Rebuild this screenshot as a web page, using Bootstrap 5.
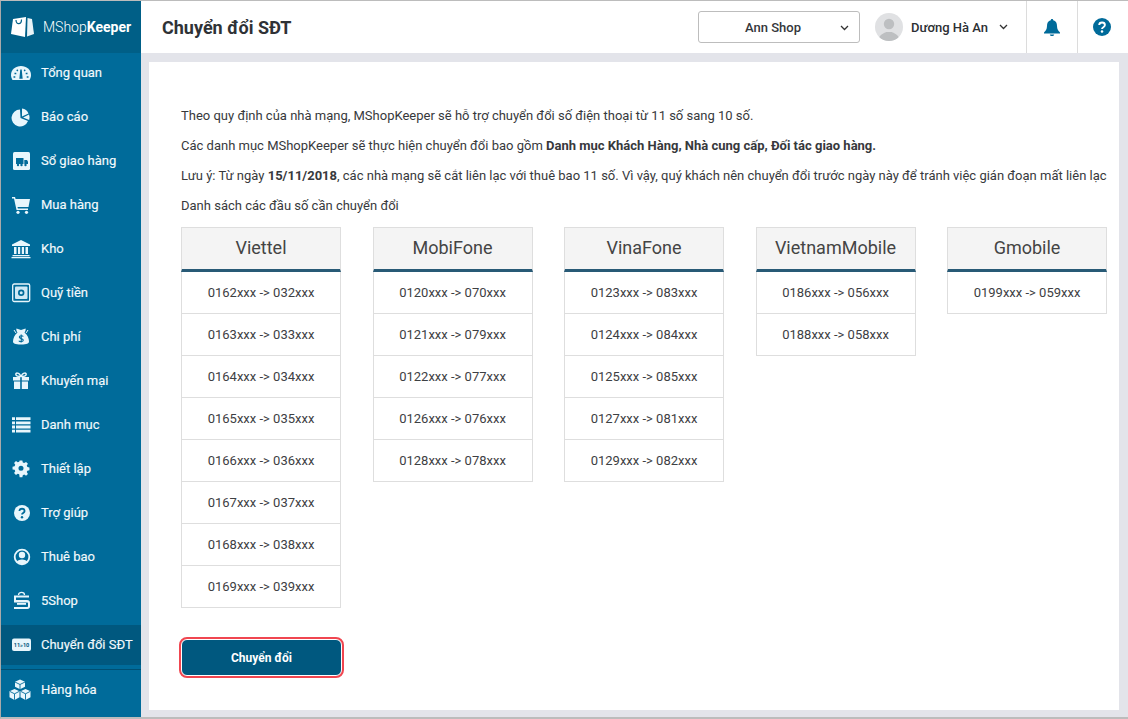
<!DOCTYPE html>
<html lang="vi">
<head>
<meta charset="utf-8">
<title>Chuyển đổi SĐT</title>
<link rel="stylesheet" href="https://cdn.jsdelivr.net/npm/bootstrap@5.3.0/dist/css/bootstrap.min.css">
<style>
html,body{height:100%;margin:0;overflow:hidden}
body{font-family:Roboto,"Liberation Sans",sans-serif;font-size:13px;color:#37393c;background:#e3e4ea}
.shell{width:1128px;height:719px;border:1px solid #bcbcbc;border-right:0;border-bottom:2px solid #bcbcbc;border-left-color:#a9a9a9}
.sidebar{width:140px;flex:none;background:#006b9a;color:#fff}
.brand{height:52px;background:#005f87;font-size:14px;padding-left:10px;gap:9px;margin-bottom:-2px;position:relative;z-index:1}
.brand span{font-weight:300}
.brand b{font-weight:700}
.sideitem{height:44px;padding-left:10px;gap:10px;font-size:13px;font-weight:400;-webkit-text-stroke:.15px #f2f9fc;color:#f2f9fc;white-space:nowrap}
.sideitem svg{width:20px;height:20px;flex:none}
.sideitem.now{height:40px;background:#00587f;margin-top:2px;margin-bottom:4px}
.sideitem.last{border-top:1px solid #004f72;height:41px}
.badgetext{font:700 5.600px Roboto,"Liberation Sans",sans-serif;fill:#00587f;-webkit-text-stroke:0}
.topbar{height:52px;background:#fff;flex:none}
.pagetitle{font-size:18px;font-weight:700;color:#2f3236;padding-left:21px}
.shopbox{width:162px;height:32px;border:1px solid #bdbdbd;border-radius:3px;font-size:13px;font-weight:500;color:#34373b;position:relative;margin-right:15px;padding-top:1px}
.shopbox .shopname{margin-left:-12px}
.shopbox svg{position:absolute;right:10px;top:13px}
.avatar{width:28px;height:28px;border-radius:50%;background:#e0e1e3;overflow:hidden;flex:none}
.username{font-size:13px;font-weight:500;color:#2c2f33;margin-left:8px;margin-right:11px;white-space:nowrap;padding-top:2px}
.topcell{width:51px;height:52px;border-left:1px solid #dcdcdc}
.helpcell{padding-right:3px}
.userblock{width:151px}
.stage{padding:9px 9px 7px 8px;min-height:0}
.panel{background:#fff;padding:45px 0 0 32px;height:100%;overflow:hidden}
.copy{height:30px;line-height:16px;margin:0;padding-top:1px;white-space:nowrap}
.copy b{font-weight:700}
.netgrid{display:flex;gap:31.5px;margin-top:0;align-items:flex-start}
.netcol{width:160px;flex:none}
.nethead{height:45px;background:#f4f4f4;border:1px solid #dedede;border-bottom:3px solid #285a76;font-size:18px;color:#444;text-align:center;line-height:40px}
.netrow{height:42px;border:1px solid #dedede;border-top:0;text-align:center;line-height:41px;font-size:13px;color:#3d4043}
.convert{display:block;width:161px;height:37px;margin-top:31px;background:#00587f;color:#fff;font-weight:700;font-size:12px;border:1px solid #fff;border-radius:6px;outline:2px solid #f04650;padding:1px 0 0}
</style>
</head>
<body>
<div class="shell d-flex">
  <nav class="sidebar d-flex flex-column">
    <div class="brand d-flex align-items-center">
      <svg width="23" height="20" viewBox="0 0 23 20"><path d="M2 2 15 0l-1 20L0 17z" fill="#fff"/><path d="M16.500 1l4.500 1 2 15-7 2.500z" fill="#e9f4f8"/><path d="M5 3c0 5 5.500 5 5.500-.5" fill="none" stroke="#005f87" stroke-width="1.200"/></svg>
      <div><span>MShop</span><b>Keeper</b></div>
    </div>
    <div class="sideitem d-flex align-items-center"><svg viewBox="0 0 20 20"><path d="M1.500 17C.5 15.500 0 13.800 0 12 0 6.500 4.500 3 10 3s10 3.500 10 9c0 1.800-.5 3.500-1.500 5z" fill="#e8f6fc"/><path d="M10 6.500l.9 8.500H9.100zM3.500 10.500h1.800M14.700 10.500h1.800M5.800 6.800l1 1.200M14.200 6.800l-1 1.200M2.500 14h1.800M15.700 14h1.800" stroke="#006b9a" stroke-width="1.400" fill="#006b9a"/></svg>Tổng quan</div>
    <div class="sideitem d-flex align-items-center"><svg viewBox="0 0 20 20"><path d="M9 2.500a8.500 8.500 0 1 0 8 11.500L9.500 11z" fill="#e8f6fc"/><path d="M11 1.500a8 8 0 0 1 6.500 5L11 9.500zM12 10.500l6-3a8 8 0 0 1 .2 5.500z" fill="#e8f6fc"/></svg>Báo cáo</div>
    <div class="sideitem d-flex align-items-center"><svg viewBox="0 0 20 20"><rect x="2" y="1" width="17" height="18" rx="1.500" fill="#e8f6fc"/><path d="M5 7h7.500v6H5zM13.300 9h2.700l1 1.800V13h-3.700z" fill="#006b9a"/><circle cx="7" cy="14" r="1.200" fill="#006b9a"/><circle cx="10.500" cy="14" r="1.200" fill="#006b9a"/><circle cx="14.500" cy="14" r="1.200" fill="#006b9a"/></svg>Sổ giao hàng</div>
    <div class="sideitem d-flex align-items-center"><svg viewBox="0 0 20 20"><path d="M1 2h3l.6 2H19l-1.500 8H6.500l.4 1.500H17V15H5.500L3 3.500H1z" fill="#e8f6fc"/><circle cx="7" cy="17.300" r="1.600" fill="#e8f6fc"/><circle cx="15.500" cy="17.300" r="1.600" fill="#e8f6fc"/></svg>Mua hàng</div>
    <div class="sideitem d-flex align-items-center"><svg viewBox="0 0 20 20"><path d="M10 1l9 4.500V7H1V5.500z" fill="#e8f6fc"/><path d="M3 8h2.500v7H3zM7 8h2.200v7H7zM10.800 8H13v7h-2.200zM14.500 8H17v7h-2.500zM1.500 16h17v1.200h-17zM.5 18h19v1.200H.5z" fill="#e8f6fc"/></svg>Kho</div>
    <div class="sideitem d-flex align-items-center"><svg viewBox="0 0 20 20"><rect x="1.700" y="1" width="17" height="17.500" rx="1.500" fill="none" stroke="#e8f6fc" stroke-width="1.300"/><rect x="4" y="3.500" width="12.500" height="12.500" rx="1" fill="#cfe9f5"/><circle cx="10.200" cy="9.700" r="3.200" fill="#006b9a"/><circle cx="10.200" cy="9.700" r="1.500" fill="#cfe9f5"/></svg>Quỹ tiền</div>
    <div class="sideitem d-flex align-items-center"><svg viewBox="0 0 20 20"><path d="M6.500 5.500C5.500 4 5 2.500 5.500 1.500L10 3l4.500-1.500c.5 1 0 2.500-1 4 3 2.500 4.500 6 4.500 9 0 2-2 3-8 3s-8-1-8-3c0-3 1.500-6.500 4.500-9z" fill="#e8f6fc"/><path d="M3 3l2 3M17 3l-2 3" stroke="#e8f6fc" stroke-width="1"/><path d="M12.300 9.500c-.6-1-3.900-1.300-4 .5-.1 2 4.100 1.200 4 3.300-.1 1.800-3.700 1.600-4.500.4M10.200 7.500v8" fill="none" stroke="#006b9a" stroke-width="1.100"/></svg>Chi phí</div>
    <div class="sideitem d-flex align-items-center"><svg viewBox="0 0 20 20"><path d="M2 6h7.200v3.500H2zM10.800 6H18v3.500h-7.200zM3 10.500h6.200V18H3zM10.800 10.500H17V18h-6.200z" fill="#e8f6fc"/><path d="M10 5.500C8 1 4 1.500 5 4c.5 1.300 3 1.500 5 1.500zm0 0c2-4.500 6-4 5-1.500-.5 1.300-3 1.500-5 1.500z" fill="none" stroke="#e8f6fc" stroke-width="1.500"/></svg>Khuyến mại</div>
    <div class="sideitem d-flex align-items-center"><svg viewBox="0 0 20 20"><path d="M1 3h3v2.800H1zM5 3h14.500v2.800H5zM1 7.200h3V10H1zM5 7.200h14.500V10H5zM1 11.400h3v2.800H1zM5 11.400h14.500v2.800H5zM1 15.600h3v2.800H1zM5 15.600h14.500v2.800H5z" fill="#e8f6fc" transform="translate(0 -.8)"/></svg>Danh mục</div>
    <div class="sideitem d-flex align-items-center"><svg viewBox="0 0 20 20"><path fill-rule="evenodd" d="M8.500 2h3l.5 2.300 1.600.7 2-1.300 2.100 2.100-1.300 2 .7 1.600 2.300.5v3l-2.300.5-.7 1.600 1.300 2-2.100 2.100-2-1.300-1.600.7-.5 2.300h-3L8 17.500l-1.600-.7-2 1.300-2.100-2.100 1.300-2-.7-1.600L.6 12V9l2.300-.5.7-1.600-1.300-2 2.100-2.100 2 1.300L8 3.400zM10 8a2.800 2.800 0 1 0 0 5.600A2.800 2.800 0 0 0 10 8z" fill="#e8f6fc" transform="translate(1 -.4) scale(.9)"/></svg>Thiết lập</div>
    <div class="sideitem d-flex align-items-center"><svg viewBox="0 0 20 20"><circle cx="11" cy="10" r="8" fill="#e8f6fc"/><path d="M8.400 8c.1-3 5.200-3 5.200 0 0 2-2.600 2-2.600 3.600" fill="none" stroke="#006b9a" stroke-width="1.800"/><circle cx="11" cy="14.200" r="1.200" fill="#006b9a"/></svg>Trợ giúp</div>
    <div class="sideitem d-flex align-items-center"><svg viewBox="0 0 20 20"><circle cx="11" cy="10" r="7.300" fill="none" stroke="#e8f6fc" stroke-width="1.800"/><circle cx="11" cy="8" r="3.200" fill="#e8f6fc"/><path d="M5.500 15c1-3.500 10-3.500 11 0-3 3-8 3-11 0z" fill="#e8f6fc"/></svg>Thuê bao</div>
    <div class="sideitem d-flex align-items-center"><svg viewBox="0 0 20 20"><path d="M3 4.500h15v2H5V9h11c2 0 3 1 3 3v3.500c0 1.500-1 2.500-2.500 2.500H3v-2h13c.7 0 1-.3 1-1v-2.500c0-.7-.3-1-1-1H3z" fill="#e8f6fc"/><path d="M7.500 4c0-3.500 6-3.500 6 0" fill="none" stroke="#e8f6fc" stroke-width="1.300"/><path d="M6 12h9v1.800H6z" fill="#e8f6fc"/></svg>5Shop</div>
    <div class="sideitem now d-flex align-items-center"><svg viewBox="0 0 20 20"><rect x="1" y="3.500" width="19" height="12.500" rx="2" fill="#e8f6fc"/><text class="badgetext" x="10.500" y="11.800" text-anchor="middle">11»10</text></svg>Chuyển đổi SĐT</div>
    <div class="sideitem last d-flex align-items-center"><svg viewBox="0 0 22 22" style="margin-left:-2px;width:22px;height:22px"><path d="M11 .5l5 2.300v5L11 10.300 6 7.800v-5zM5.500 10l5 2.300v6L5.500 21 .5 18.300v-6zM16.500 10l5 2.300v6L16.500 21l-5-2.700v-6z" fill="#e8f6fc"/><path d="M6 3l5 2.500L16 3M11 5.500v4.500M1 12.500l4.500 2.300 4.500-2.300M5.500 14.800v6M12 12.500l4.500 2.300 4.500-2.300M16.500 14.800v6" fill="none" stroke="#006b9a" stroke-width=".9"/></svg>Hàng hóa</div>
  </nav>
  <div class="flex-grow-1 d-flex flex-column" style="min-width:0">
    <header class="topbar d-flex align-items-center">
      <div class="pagetitle flex-grow-1">Chuyển đổi SĐT</div>
      <div class="shopbox d-flex align-items-center justify-content-center"><span class="shopname">Ann Shop</span><svg width="9" height="6" viewBox="0 0 9 6"><path d="M1 1l3.500 3.500L8 1" fill="none" stroke="#333" stroke-width="1.300"/></svg></div>
      <div class="userblock d-flex align-items-center">
        <div class="avatar"><svg width="28" height="28" viewBox="0 0 28 28"><circle cx="14" cy="11" r="5.200" fill="#bdbfc1"/><path d="M3 28c1-7 7-8 8-9h6c1 1 7 2 8 9z" fill="#bdbfc1"/></svg></div>
        <div class="username">Dương Hà An</div>
        <svg width="9" height="6" viewBox="0 0 9 6"><path d="M1 1l3.500 3.500L8 1" fill="none" stroke="#333" stroke-width="1.300"/></svg>
      </div>
      <div class="topcell d-flex align-items-center justify-content-center"><svg width="16" height="19" viewBox="0 0 16 19"><path d="M8 1c.8 0 1.200.5 1.200 1.200C12 3 13 5 13 8c0 3.500 1.500 5 3 6.500V15.500H0v-1C1.500 13 3 11.500 3 8c0-3 1-5 3.800-5.800C6.800 1.500 7.200 1 8 1z" fill="#006b9a"/><path d="M5.800 16.500h4.400c-.3 2-4.100 2-4.400 0z" fill="#006b9a"/></svg></div>
      <div class="topcell helpcell d-flex align-items-center justify-content-center"><svg width="18" height="18" viewBox="0 0 18 18"><circle cx="9" cy="9" r="9" fill="#006b9a"/><path d="M6.200 7c.1-3.300 5.700-3.300 5.700 0 0 2.200-2.900 2.100-2.900 4" fill="none" stroke="#fff" stroke-width="1.900"/><circle cx="9" cy="13.500" r="1.250" fill="#fff"/></svg></div>
    </header>
    <main class="stage flex-grow-1">
      <div class="panel">
        <p class="copy">Theo quy định của nhà mạng, MShopKeeper sẽ hỗ trợ chuyển đổi số điện thoại từ 11 số sang 10 số.</p>
        <p class="copy">Các danh mục MShopKeeper sẽ thực hiện chuyển đổi bao gồm <b>Danh mục Khách Hàng, Nhà cung cấp, Đối tác giao hàng.</b></p>
        <p class="copy">Lưu ý: Từ ngày <b>15/11/2018</b>, các nhà mạng sẽ cắt liên lạc với thuê bao 11 số. Vì vậy, quý khách nên chuyển đổi trước ngày này để tránh việc gián đoạn mất liên lạc</p>
        <p class="copy">Danh sách các đầu số cần chuyển đổi</p>
        <div class="netgrid">
          <div class="netcol"><div class="nethead">Viettel</div><div class="netrow">0162xxx -&gt; 032xxx</div><div class="netrow">0163xxx -&gt; 033xxx</div><div class="netrow">0164xxx -&gt; 034xxx</div><div class="netrow">0165xxx -&gt; 035xxx</div><div class="netrow">0166xxx -&gt; 036xxx</div><div class="netrow">0167xxx -&gt; 037xxx</div><div class="netrow">0168xxx -&gt; 038xxx</div><div class="netrow">0169xxx -&gt; 039xxx</div></div>
          <div class="netcol"><div class="nethead">MobiFone</div><div class="netrow">0120xxx -&gt; 070xxx</div><div class="netrow">0121xxx -&gt; 079xxx</div><div class="netrow">0122xxx -&gt; 077xxx</div><div class="netrow">0126xxx -&gt; 076xxx</div><div class="netrow">0128xxx -&gt; 078xxx</div></div>
          <div class="netcol"><div class="nethead">VinaFone</div><div class="netrow">0123xxx -&gt; 083xxx</div><div class="netrow">0124xxx -&gt; 084xxx</div><div class="netrow">0125xxx -&gt; 085xxx</div><div class="netrow">0127xxx -&gt; 081xxx</div><div class="netrow">0129xxx -&gt; 082xxx</div></div>
          <div class="netcol"><div class="nethead">VietnamMobile</div><div class="netrow">0186xxx -&gt; 056xxx</div><div class="netrow">0188xxx -&gt; 058xxx</div></div>
          <div class="netcol"><div class="nethead">Gmobile</div><div class="netrow">0199xxx -&gt; 059xxx</div></div>
        </div>
        <button class="btn convert" type="button">Chuyển đổi</button>
      </div>
    </main>
  </div>
</div>
<script src="https://cdn.jsdelivr.net/npm/bootstrap@5.3.0/dist/js/bootstrap.bundle.min.js"></script>
</body>
</html>
